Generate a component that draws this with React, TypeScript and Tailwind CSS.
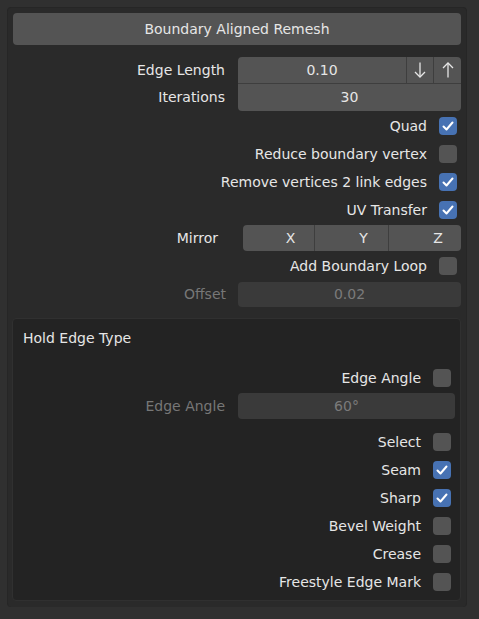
import React from "react";

const font = { fontFamily: '"DejaVu Sans", "Liberation Sans", sans-serif' };

function Check({ on }: { on: boolean }) {
  return (
    <div
      className={`w-[18px] h-[18px] shrink-0 rounded-[4px] flex items-center justify-center ${
        on ? "bg-[#4772b3]" : "bg-[#545454]"
      }`}
    >
      {on && (
        <svg width="14" height="14" viewBox="0 0 14 14">
          <polyline
            points="2.5,7.5 5.5,10.5 11.5,3.5"
            fill="none"
            stroke="#ffffff"
            strokeWidth="2"
            strokeLinecap="round"
            strokeLinejoin="round"
          />
        </svg>
      )}
    </div>
  );
}

function CheckRow({ label, on }: { label: string; on: boolean }) {
  return (
    <div className="h-[28px] flex items-center justify-end pr-[4px]">
      <span className="text-[14px] text-[#e6e6e6] mr-[12px]">{label}</span>
      <Check on={on} />
    </div>
  );
}

function Arrow({ up }: { up?: boolean }) {
  return (
    <svg width="14" height="18" viewBox="0 0 14 18" style={{ transform: up ? "rotate(180deg)" : undefined }}>
      <line x1="7" y1="1.5" x2="7" y2="16" stroke="#e6e6e6" strokeWidth="1.3" />
      <polyline points="2,11 7,16 12,11" fill="none" stroke="#e6e6e6" strokeWidth="1.3" />
    </svg>
  );
}

export default function App() {
  return (
    <div className="w-[479px] h-[619px] bg-[#303030] pt-[7px] pl-[7px]" style={font}>
      <div className="w-[460px] h-[600px] bg-[#2a2a2a] border-l border-t border-r border-[#262626] rounded-[4px] pl-[5px] pr-[5px] pt-[5px] flex flex-col">
        <div className="h-[32px] rounded-[4px] bg-[#545454] flex items-center justify-center text-[14px] text-[#e6e6e6]">
          Boundary Aligned Remesh
        </div>

        <div className="mt-[12px] flex">
          <div className="w-[212px] shrink-0 flex flex-col items-end">
            <div className="h-[27px] flex items-center text-[14px] text-[#e6e6e6]">Edge Length</div>
            <div className="h-[27px] flex items-center text-[14px] text-[#e6e6e6]">Iterations</div>
          </div>
          <div className="ml-[13px] w-[223px] shrink-0 flex flex-col rounded-[4px] overflow-hidden">
            <div className="h-[27px] flex border-b border-[#3e3e3e]">
              <div className="flex-1 bg-[#545454] flex items-center justify-center text-[14px] text-[#e6e6e6]">0.10</div>
              <div className="w-[27px] bg-[#545454] border-l border-[#3e3e3e] flex items-center justify-center">
                <Arrow />
              </div>
              <div className="w-[28px] bg-[#545454] border-l border-[#3e3e3e] flex items-center justify-center">
                <Arrow up />
              </div>
            </div>
            <div className="h-[27px] bg-[#545454] flex items-center justify-center text-[14px] text-[#e6e6e6]">30</div>
          </div>
        </div>

        <div className="mt-[1px] flex flex-col">
          <CheckRow label="Quad" on />
          <CheckRow label="Reduce boundary vertex" on={false} />
          <CheckRow label="Remove vertices 2 link edges" on />
          <CheckRow label="UV Transfer" on />
          <div className="h-[28px] flex items-center">
            <div className="w-[205px] shrink-0 flex justify-end text-[14px] text-[#e6e6e6]">Mirror</div>
            <div className="ml-[25px] w-[218px] shrink-0 h-[26px] flex rounded-[4px] overflow-hidden bg-[#545454]">
              <div className="w-[71px] flex items-center justify-center pl-[24px] text-[14px] text-[#e6e6e6]">X</div>
              <div className="w-[74px] border-l border-[#3e3e3e] flex items-center justify-center pl-[24px] text-[14px] text-[#e6e6e6]">Y</div>
              <div className="flex-1 border-l border-[#3e3e3e] flex items-center justify-center pl-[26px] text-[14px] text-[#e6e6e6]">Z</div>
            </div>
          </div>
          <CheckRow label="Add Boundary Loop" on={false} />
          <div className="h-[28px] flex items-center">
            <div className="w-[213px] shrink-0 flex justify-end text-[14px] text-[#777777]">Offset</div>
            <div className="ml-[12px] w-[223px] shrink-0 h-[25px] rounded-[4px] bg-[#3a3a3a] flex items-center justify-center text-[14px] text-[#7a7a7a]">
              0.02
            </div>
          </div>
        </div>

        <div className="mt-[10px] -ml-[1px] w-[449px] h-[283px] bg-[#232323] border border-[#303030] rounded-[4px] pl-[6px] pr-[5px] flex flex-col">
          <div className="h-[38px] flex items-center pl-[4px] text-[14px] text-[#e6e6e6]">Hold Edge Type</div>
          <div className="mt-[7px]">
            <CheckRow label="Edge Angle" on={false} />
          </div>
          <div className="h-[28px] flex items-center">
            <div className="w-[206px] shrink-0 flex justify-end text-[14px] text-[#777777]">Edge Angle</div>
            <div className="ml-[13px] w-[217px] shrink-0 h-[26px] rounded-[4px] bg-[#3a3a3a] flex items-center justify-center text-[14px] text-[#7a7a7a]">
              60°
            </div>
          </div>
          <div className="mt-[8px] flex flex-col">
            <CheckRow label="Select" on={false} />
            <CheckRow label="Seam" on />
            <CheckRow label="Sharp" on />
            <CheckRow label="Bevel Weight" on={false} />
            <CheckRow label="Crease" on={false} />
            <CheckRow label="Freestyle Edge Mark" on={false} />
          </div>
        </div>
      </div>
    </div>
  );
}
